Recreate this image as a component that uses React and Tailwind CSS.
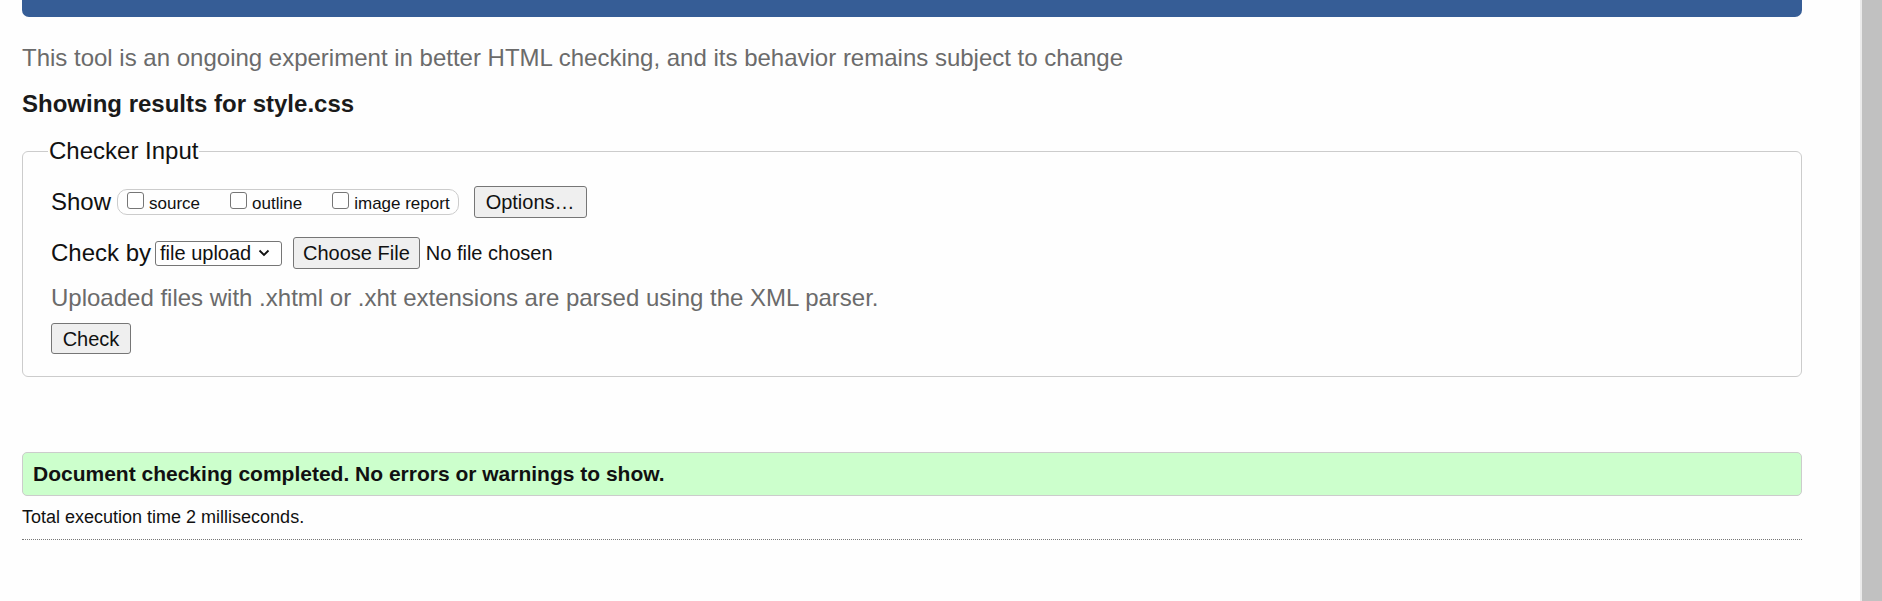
import React from 'react';

const font = { fontFamily: '"Liberation Sans", Arial, sans-serif' };

function Box({ label }) {
  return (
    <label className="flex items-center">
      <input
        type="checkbox"
        className="appearance-none w-[17px] h-[17px] border-[1.5px] border-[#767676] rounded-[3px] bg-white mr-[5px] -mt-[4px]"
      />
      <span className="text-[17px] text-[#111] mt-[4px]">{label}</span>
    </label>
  );
}

export default function App() {
  return (
    <div className="flex h-[601px] w-[1882px] overflow-hidden bg-[#fefefe] text-[#111]" style={font}>
      <div className="flex-1 pl-[22px] pr-[58px]">
        {/* banner edge */}
        <div className="h-[17px] bg-[#365d96] rounded-b-[7px]" />

        <p className="mt-[27px] text-[24px] leading-[28px] text-[#6b6b6b]">
          This tool is an ongoing experiment in better HTML checking, and its behavior remains subject to change
        </p>
        <h2 className="mt-[18px] text-[24px] leading-[28px] font-bold text-[#1a1a1a]">Showing results for style.css</h2>

        <fieldset className="mt-[19px] border border-[#cccccc] rounded-[6px] pl-[28px] pb-[22px]">
          <legend className="-ml-[3px] px-[1px] text-[24px] leading-[28px]">Checker Input</legend>

          <div className="mt-[20px] h-[34px] flex items-center">
            <span className="text-[24px] mr-[6px]">Show</span>
            <div className="flex items-center h-[26px] border border-[#cccccc] rounded-[10px] pl-[9px] pr-[8px] gap-[30px]">
              <Box label="source" />
              <Box label="outline" />
              <Box label="image report" />
            </div>
            <button className="ml-[15px] h-[32px] px-[11px] border border-[#767676] rounded-[3px] bg-[#efefef] text-[20px]">
              Options…
            </button>
          </div>

          <div className="mt-[17px] h-[34px] flex items-center">
            <span className="text-[24px] mr-[4px]">Check by</span>
            <div className="flex items-center h-[25px] w-[127px] border border-[#767676] rounded-[3px] bg-white pl-[4px] text-[20px]">
              <span>file upload</span>
              <svg className="ml-[7px]" width="12" height="8" viewBox="0 0 12 8">
                <path d="M1.5 1.5 L6 6 L10.5 1.5" fill="none" stroke="#111" strokeWidth="1.8" />
              </svg>
            </div>
            <button className="ml-[11px] h-[32px] px-[9px] border border-[#767676] rounded-[3px] bg-[#efefef] text-[20px]">
              Choose File
            </button>
            <span className="ml-[6px] text-[20px]">No file chosen</span>
          </div>

          <p className="mt-[14px] h-[28px] text-[24px] leading-[28px] text-[#6b6b6b]">
            Uploaded files with .xhtml or .xht extensions are parsed using the XML parser.
          </p>

          <button className="mt-[11px] h-[31px] w-[80px] border border-[#767676] rounded-[3px] bg-[#efefef] text-[20px]">
            Check
          </button>
        </fieldset>

        <div className="mt-[75px] h-[44px] flex items-center bg-[#ccffcc] border border-[#cccccc] rounded-[5px] pl-[10px]">
          <span className="text-[21px] font-bold">Document checking completed. No errors or warnings to show.</span>
        </div>

        <p className="mt-[10px] text-[18px] leading-[22px]">Total execution time 2 milliseconds.</p>
        <div className="mt-[11px] border-t border-dotted border-[#777]" />
      </div>

      <div className="w-[22px] h-full bg-[#c1c1c1] border-l-2 border-[#ebebeb]" />
    </div>
  );
}
